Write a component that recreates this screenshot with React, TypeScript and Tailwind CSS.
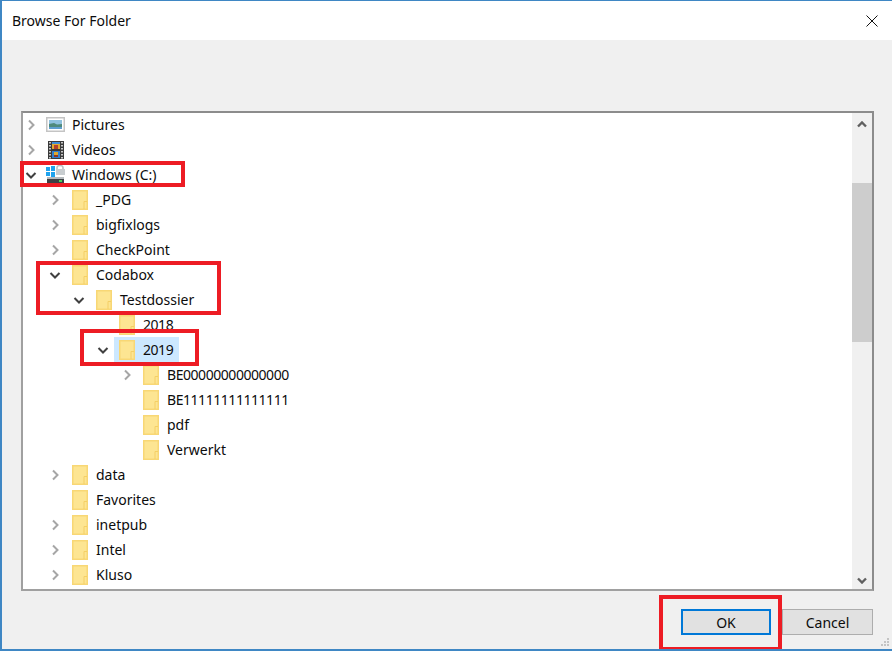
import React from 'react';

type IconKind = 'folder' | 'pictures' | 'videos' | 'drive';

interface TreeRow {
  label: string;
  depth: number;
  icon: IconKind;
  arrow?: 'closed' | 'open';
  selected?: boolean;
  digits?: boolean;
}

const rows: TreeRow[] = [
  { label: 'Pictures', depth: 0, icon: 'pictures', arrow: 'closed' },
  { label: 'Videos', depth: 0, icon: 'videos', arrow: 'closed' },
  { label: 'Windows (C:)', depth: 0, icon: 'drive', arrow: 'open' },
  { label: '_PDG', depth: 1, icon: 'folder', arrow: 'closed' },
  { label: 'bigfixlogs', depth: 1, icon: 'folder', arrow: 'closed' },
  { label: 'CheckPoint', depth: 1, icon: 'folder', arrow: 'closed' },
  { label: 'Codabox', depth: 1, icon: 'folder', arrow: 'open' },
  { label: 'Testdossier', depth: 2, icon: 'folder', arrow: 'open' },
  { label: '2018', depth: 3, icon: 'folder', digits: true },
  { label: '2019', depth: 3, icon: 'folder', arrow: 'open', selected: true, digits: true },
  { label: 'BE00000000000000', depth: 4, icon: 'folder', arrow: 'closed', digits: true },
  { label: 'BE11111111111111', depth: 4, icon: 'folder', digits: true },
  { label: 'pdf', depth: 4, icon: 'folder' },
  { label: 'Verwerkt', depth: 4, icon: 'folder' },
  { label: 'data', depth: 1, icon: 'folder', arrow: 'closed' },
  { label: 'Favorites', depth: 1, icon: 'folder' },
  { label: 'inetpub', depth: 1, icon: 'folder', arrow: 'closed' },
  { label: 'Intel', depth: 1, icon: 'folder', arrow: 'closed' },
  { label: 'Kluso', depth: 1, icon: 'folder', arrow: 'closed' },
];

// the tree's indent is not quite 24px per level in the original
const indents = [0, 24, 48, 71, 95];

const FolderIcon = () => (
  <svg width="16" height="20" viewBox="0 0 16 20" className="shrink-0">
    <rect x="0.75" y="0.75" width="14.5" height="18.5" fill="#fde592" stroke="#f8d775" strokeWidth="1.5" />
    <path d="M12 19v-7.5h3" fill="none" stroke="#f4cf66" strokeWidth="1" />
  </svg>
);

const PicturesIcon = () => (
  <svg width="19" height="15" viewBox="0 0 19 15" className="-ml-[2px] shrink-0">
    <rect x="0.75" y="0.75" width="17.5" height="13.5" fill="#ffffff" stroke="#c4c4c4" strokeWidth="1.5" />
    <rect x="3" y="3" width="13" height="9" fill="#8fc1de" />
    <path d="M3 7l5-1 3 1.5 5-.5v4H3z" fill="#4f8a7c" />
    <rect x="3" y="10" width="13" height="2" fill="#5f9fd0" />
  </svg>
);

const VideosIcon = () => (
  <svg width="16" height="18" viewBox="0 0 16 18" className="shrink-0">
    <rect width="16" height="18" fill="#3a3a3a" />
    {[1, 4, 7, 10, 13, 16].map((y) => (
      <React.Fragment key={y}>
        <rect x="1" y={y} width="2" height="1.5" fill="#c8c8c8" />
        <rect x="13" y={y} width="2" height="1.5" fill="#c8c8c8" />
      </React.Fragment>
    ))}
    <rect x="4" y="1" width="8" height="7" fill="#e0a92f" />
    <rect x="4" y="1" width="8" height="2" fill="#3f8ed8" />
    <rect x="6" y="4" width="4" height="4" fill="#b3402c" />
    <rect x="4" y="10" width="8" height="7" fill="#2f7fd0" />
    <rect x="6" y="11" width="4" height="4" fill="#e0a92f" />
    <rect x="6" y="14" width="4" height="2" fill="#8a3526" />
  </svg>
);

const DriveIcon = () => (
  <svg width="20" height="20" viewBox="0 0 20 20" className="-ml-[2px] shrink-0">
    <path d="M11 4V2.5a3 2 0 0 1 6 0V4" fill="none" stroke="#b8bdc1" strokeWidth="1.5" />
    <rect x="10" y="4" width="9" height="6" fill="#c8cdd0" />
    <rect x="0" y="2" width="4" height="4" fill="#1fa3ee" />
    <rect x="5" y="1" width="4" height="5" fill="#1fa3ee" />
    <rect x="0" y="7" width="4" height="4" fill="#1fa3ee" />
    <rect x="5" y="7" width="4" height="5" fill="#1fa3ee" />
    <rect x="1" y="12" width="17" height="2" fill="#b5babd" />
    <rect x="1" y="14" width="17" height="6" fill="#3d4145" />
    <rect x="13" y="15" width="3" height="2" fill="#4fd05a" />
  </svg>
);

const RowIcon = ({ kind }: { kind: IconKind }) => {
  if (kind === 'pictures') return <PicturesIcon />;
  if (kind === 'videos') return <VideosIcon />;
  if (kind === 'drive') return <DriveIcon />;
  return <FolderIcon />;
};

const Arrow = ({ kind }: { kind?: 'closed' | 'open' }) => {
  if (!kind) return null;
  return (
    <svg width="12" height="12" viewBox="0 0 12 12" className="block">
      {kind === 'closed' ? (
        <path d="M4 1.5L8.5 6L4 10.5" fill="none" stroke="#a6a6a6" strokeWidth="2" />
      ) : (
        <path d="M1.5 4L6 8.5L10.5 4" fill="none" stroke="#404040" strokeWidth="2" />
      )}
    </svg>
  );
};

const Row = ({ row }: { row: TreeRow }) => (
  <div className="flex h-[25px] shrink-0 items-center" style={{ paddingLeft: indents[row.depth] }}>
    <div className={`flex w-[24px] shrink-0 justify-start ${row.depth >= 3 ? 'pl-[3px]' : 'pl-[2px]'}`}>
      <Arrow kind={row.arrow} />
    </div>
    <div className={`-ml-[4px] flex h-[25px] items-center pl-[5px] pr-[6px] ${row.selected ? 'bg-[#cce8ff]' : ''}`}>
      <div className="flex w-[24px] items-center">
        <RowIcon kind={row.icon} />
      </div>
      <span className={`text-[14px] leading-[25px] text-[#0c0c0c] ${row.digits ? 'tracking-[-0.45px]' : ''}`}>{row.label}</span>
    </div>
  </div>
);

const Scrollbar = () => (
  <div className="flex w-[20px] shrink-0 flex-col bg-[#f0f0f0]">
    <div className="flex h-[22px] items-center justify-center pt-[1px]">
      <svg width="10" height="7" viewBox="0 0 10 7">
        <path d="M1 5.5l4-4 4 4" fill="none" stroke="#606060" strokeWidth="2.4" />
      </svg>
    </div>
    <div className="mt-[48px] h-[159px] bg-[#cdcdcd]" />
    <div className="flex-1" />
    <div className="flex h-[18px] items-center justify-center">
      <svg width="10" height="7" viewBox="0 0 10 7">
        <path d="M1 1.5l4 4 4-4" fill="none" stroke="#606060" strokeWidth="2.4" />
      </svg>
    </div>
  </div>
);

const Highlight = ({ className }: { className: string }) => (
  <div className={`absolute border-[4px] border-[#ed1c24] ${className}`} />
);

const Grip = () => (
  <svg width="10" height="10" viewBox="0 0 10 10" className="absolute bottom-[2px] right-[2px]">
    {[[7, 1], [4, 4], [7, 4], [1, 7], [4, 7], [7, 7]].map(([x, y]) => (
      <rect key={`${x}-${y}`} x={x} y={y} width="2" height="2" fill="#c4c4c4" />
    ))}
  </svg>
);

export default function App() {
  return (
    <div className="relative flex h-[651px] w-[892px] flex-col overflow-hidden border-t border-b-2 border-l-2 border-[#3f87c4] bg-[#f0f0f0] font-['Noto_Sans',sans-serif]">
      <div className="flex h-[39px] shrink-0 items-center justify-between bg-white pl-[10px] pr-[14px]">
        <span className="text-[14px] text-[#0c0c0c]">Browse For Folder</span>
        <svg width="12" height="12" viewBox="0 0 12 12" className="mt-[1px]">
          <path d="M0.5 0.5l11 11M11.5 0.5l-11 11" stroke="#111111" strokeWidth="1" fill="none" />
        </svg>
      </div>

      <div className="flex flex-1 flex-col pb-[14px] pl-[19px] pr-[19px] pt-[71px]">
        <div className="flex h-[480px] w-[853px] border-2 border-[#a0a0a0] border-r-[#8c8c8c] border-t-[#8c8c8c] bg-white">
          <div className="min-w-0 flex-1 overflow-hidden">
            <div className="-mt-[1px] flex flex-col">
              {rows.map((row) => (
                <Row key={row.label} row={row} />
              ))}
            </div>
          </div>
          <Scrollbar />
        </div>

        <div className="mt-[18px] flex justify-end gap-[11px]">
          <button className="h-[26px] w-[90px] border-2 border-[#0078d7] bg-[#e1e1e1] text-[14px] text-[#0c0c0c]">OK</button>
          <button className="h-[26px] w-[91px] border border-[#adadad] bg-[#e1e1e1] text-[14px] text-[#0c0c0c]">Cancel</button>
        </div>
      </div>

      <Grip />

      <Highlight className="left-[18px] top-[160px] h-[26px] w-[165px]" />
      <Highlight className="left-[34px] top-[260px] h-[54px] w-[185px]" />
      <Highlight className="left-[78px] top-[328px] h-[37px] w-[119px]" />
      <Highlight className="left-[657px] top-[594px] h-[56px] w-[123px]" />
    </div>
  );
}
